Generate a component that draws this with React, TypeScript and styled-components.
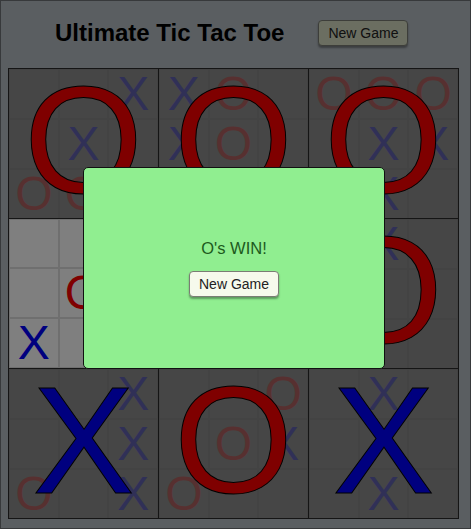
import React from "react";
import styled, { createGlobalStyle, css } from "styled-components";

type Mark = "X" | "O" | "";

interface BigCellData {
  cells: string;
  winner: Mark;
  active?: boolean;
}

const Board: BigCellData[] = [
  { cells: "..X.X.OOO", winner: "O" },
  { cells: "XO.XO..O.", winner: "O" },
  { cells: "OOO.XX.X.", winner: "O" },
  { cells: "....O.X..", winner: "", active: true },
  { cells: "X.O.XO..X", winner: "X" },
  { cells: "OX.O..O..", winner: "O" },
  { cells: "..X..XO.X", winner: "X" },
  { cells: "..O.OXO..", winner: "O" },
  { cells: ".X..X..X.", winner: "X" },
];

const GlobalStyle = createGlobalStyle`
  html, body {
    margin: 0;
    padding: 0;
    background: #b4bcc2;
  }
  body {
    font-family: "Liberation Sans", Arial, sans-serif;
  }
`;

const PageContainer = styled.div`
  width: 471px;
  height: 529px;
  box-sizing: border-box;
  border: 1px solid #6e7276;
  padding: 7px;
  background: #b4bcc2;
`;

const Header = styled.div`
  display: flex;
  align-items: center;
  gap: 34px;
  height: 50px;
  padding-left: 47px;
  margin-bottom: 10px;
`;

const Title = styled.h1`
  margin: 0;
  font-size: 24px;
  font-weight: bold;
  color: #000;
`;

const Button = styled.button<{ $muted?: boolean }>`
  font-family: "Liberation Sans", Arial, sans-serif;
  font-size: 14px;
  color: #222;
  height: 26px;
  padding: 0 9px;
  background: ${({ $muted }) => ($muted ? "#d6dcc2" : "#f6faec")};
  border: 1px solid #7a7d74;
  border-radius: 4px;
  box-shadow: 0 2px 2px rgba(0, 0, 0, 0.35);
  cursor: pointer;
`;

const Grid = styled.div`
  display: grid;
  grid-template-columns: repeat(3, 149px);
  grid-template-rows: repeat(3, 149px);
  gap: 1px;
  padding: 1px;
  width: 451px;
  box-sizing: border-box;
  background: #2a2a2a;
`;

const BigCell = styled.div<{ $active?: boolean }>`
  position: relative;
  display: grid;
  grid-template-columns: repeat(3, 1fr);
  grid-template-rows: repeat(3, 1fr);
  background: ${({ $active }) => ($active ? "#ffffff" : "#8c8c8c")};
  overflow: hidden;
`;

const SmallCell = styled.div<{ $mark: Mark; $faded: boolean }>`
  display: flex;
  align-items: center;
  justify-content: center;
  border: 1px solid rgba(0, 0, 0, 0.13);
  font-size: 48px;
  line-height: 1;
  color: ${({ $mark }) => ($mark === "O" ? "#ff0000" : "#0000ff")};
  ${({ $faded }) =>
    $faded &&
    css`
      opacity: 0.3;
    `}
`;

const WinMark = styled.div<{ $mark: Mark }>`
  position: absolute;
  inset: 0;
  display: flex;
  align-items: center;
  justify-content: center;
  padding-bottom: 8px;
  font-size: 153px;
  line-height: 1;
  color: ${({ $mark }) => ($mark === "O" ? "#ff0000" : "#0000ff")};
  -webkit-text-stroke: 1px #000;
  pointer-events: none;
`;

const Overlay = styled.div`
  position: fixed;
  inset: 0;
  display: flex;
  align-items: center;
  justify-content: center;
  padding: 7px 3px 0 0;
  background: rgba(0, 0, 0, 0.5);
`;

const Modal = styled.div`
  width: 300px;
  height: 200px;
  display: flex;
  flex-direction: column;
  align-items: center;
  justify-content: center;
  gap: 13px;
  background: #90ee90;
  border: 1px solid #111;
  border-radius: 5px;
`;

const WinText = styled.p`
  margin: 0;
  font-size: 16.5px;
  color: #1d5a1d;
`;

const App: React.FC = () => {
  return (
    <>
      <GlobalStyle />
      <PageContainer>
        <Header>
          <Title>Ultimate Tic Tac Toe</Title>
          <Button $muted>New Game</Button>
        </Header>
        <Grid>
          {Board.map((big, i) => (
            <BigCell key={i} $active={big.active}>
              {big.cells.split("").map((c, j) => {
                const mark: Mark = c === "." ? "" : (c as Mark);
                return (
                  <SmallCell key={j} $mark={mark} $faded={big.winner !== ""}>
                    {mark}
                  </SmallCell>
                );
              })}
              {big.winner && <WinMark $mark={big.winner}>{big.winner}</WinMark>}
            </BigCell>
          ))}
        </Grid>
      </PageContainer>
      <Overlay>
        <Modal>
          <WinText>O's WIN!</WinText>
          <Button>New Game</Button>
        </Modal>
      </Overlay>
    </>
  );
};

export default App;
